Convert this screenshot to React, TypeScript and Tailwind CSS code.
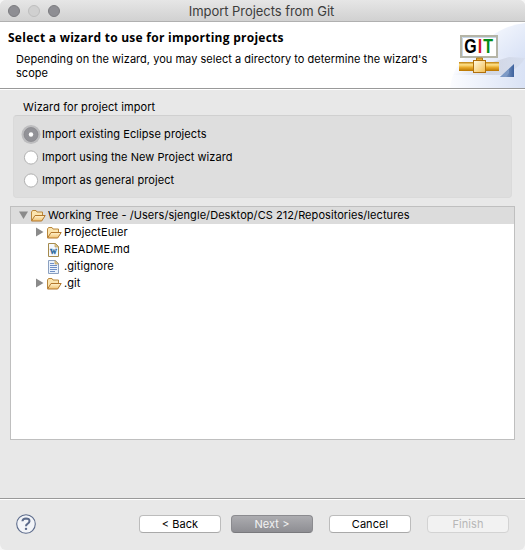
import React from 'react';

function Folder() {
  return (
    <svg width="16" height="16" viewBox="0 0 16 16" className="shrink-0">
      <defs>
        <linearGradient id="folderFront" x1="0" y1="0" x2="0" y2="1">
          <stop offset="0" stopColor="#fff3cf" />
          <stop offset="1" stopColor="#f0c06f" />
        </linearGradient>
      </defs>
      <path d="M1.5 12.5V4L2.5 2.5H6l1 1.5h5.5V7.5" fill="#fbe4ae" stroke="#b8863b" />
      <path d="M1.5 13L5 7.5h10.2l-3.5 5.5z" fill="url(#folderFront)" stroke="#b3772b" strokeLinejoin="round" />
    </svg>
  );
}

function FileIcon({ word = false }: { word?: boolean }) {
  return (
    <svg width="16" height="16" viewBox="0 0 16 16" className="shrink-0">
      <path d="M2.5 1.5h7L12.5 4.5v10h-10z" fill={word ? '#f4f8fd' : '#eaf2fc'} stroke={word ? '#a58a4c' : '#8ba0c0'} />
      <path d="M9 1.5V5h3.5z" fill="#e5cf91" stroke="#b49a5d" strokeWidth=".7" />
      {word ? (
        <text x="7.5" y="11.5" textAnchor="middle" fontFamily="Liberation Serif, serif" fontWeight="bold" fontSize="9.5" fill="#2c689d" stroke="#2c689d" strokeWidth=".3">w</text>
      ) : (
        <path d="M4 4.5h4M4 6.5h7M4 8.5h7M4 10.5h7M4 12.5h5" stroke="#6f8fc5" />
      )}
    </svg>
  );
}

function Row({ label, depth, icon, arrow }: { label: string; depth: number; icon: React.ReactNode; arrow?: 'down' | 'right' }) {
  return (
    <div className={`flex h-[17px] items-center ${depth === 0 ? 'bg-[#dcdcdc] pl-[8px]' : 'pl-[24px]'}`}>
      <svg width="11" height="11" viewBox="0 0 11 11" className="shrink-0">
        {arrow === 'down' && <path d="M0 1.5h9L4.5 9z" fill="#8a8a8a" />}
        {arrow === 'right' && <path d="M1 .5v9L8.5 5z" fill="#8a8a8a" />}
      </svg>
      {icon}
      <span className={`ml-[2px] ${depth === 0 ? 'tracking-[0.065px]' : 'tracking-[0.06px]'}`}>{label}</span>
    </div>
  );
}

function Radio({ label, checked = false, spacing }: { label: string; checked?: boolean; spacing: string }) {
  return (
    <div className="flex h-[23px] items-center">
      <svg width="20" height="20" viewBox="0 0 20 20" className="mr-px shrink-0">
        {checked ? (
          <>
            <circle cx="10" cy="9.5" r="9.5" fill="#bdbdbf" />
            <circle cx="10" cy="9.5" r="7" fill="#929297" stroke="#858589" strokeWidth=".7" />
            <circle cx="10" cy="9.5" r="2.2" fill="#fff" />
          </>
        ) : (
          <circle cx="10" cy="9.5" r="6.6" fill="#fff" stroke="#b1b1b1" />
        )}
      </svg>
      <span className={spacing}>{label}</span>
    </div>
  );
}

function GitBanner() {
  return (
    <svg width="90" height="66" viewBox="0 0 90 66" className="shrink-0">
      <defs>
        <linearGradient id="sky" x1="0" y1="0" x2="1" y2="0">
          <stop offset="0" stopColor="#fbfcff" />
          <stop offset="1" stopColor="#d9e2f5" />
        </linearGradient>
        <linearGradient id="skyTop" x1="0" y1="0" x2="1" y2="1">
          <stop offset="0" stopColor="#fcfdff" />
          <stop offset="1" stopColor="#d6e0f5" />
        </linearGradient>
        <linearGradient id="pipe" x1="0" y1="0" x2="0" y2="1">
          <stop offset="0" stopColor="#bc7e0b" />
          <stop offset=".3" stopColor="#ffe289" />
          <stop offset=".6" stopColor="#e8aa2b" />
          <stop offset="1" stopColor="#b87400" />
        </linearGradient>
        <linearGradient id="joint" x1="0" y1="0" x2="1" y2="1">
          <stop offset="0" stopColor="#fffbe5" />
          <stop offset="1" stopColor="#f2bd50" />
        </linearGradient>
        <linearGradient id="corner" x1="0" y1="0" x2="1" y2="0">
          <stop offset="0" stopColor="#a4b9d8" />
          <stop offset="1" stopColor="#3d629e" />
        </linearGradient>
        <linearGradient id="shade" x1="0" y1="0" x2="1" y2="0">
          <stop offset="0" stopColor="#cdd1dc" stopOpacity="0" />
          <stop offset=".5" stopColor="#b9becd" stopOpacity=".5" />
          <stop offset="1" stopColor="#d2d9e8" stopOpacity=".5" />
        </linearGradient>
      </defs>
      <path d="M41 33Q57 5 90 1V40H41z" fill="url(#skyTop)" />
      <path d="M15 66Q18 42 36 32L90 34V66z" fill="url(#sky)" />
      <path d="M16 53L74 35L90 36Q84 48 66 53z" fill="url(#shade)" />
      <rect x="26" y="14" width="36" height="21" fill="#fff" stroke="#b5b5a7" strokeWidth="2" />
      <path d="M27.5 34V15.5H61" fill="none" stroke="#b7cbe3" strokeWidth=".8" />
      <g transform="scale(.82 1)" fontFamily="Liberation Sans, sans-serif" fontWeight="bold" fontSize="19.5">
        <text x="35.6" y="31.5" fill="#000">G</text>
        <text x="52" y="31.5" fill="#d1121f">I</text>
        <text x="58.9" y="31.5" fill="#008b17">T</text>
      </g>
      <path d="M41.5 36h6v4h-6z" fill="#e4ac38" stroke="#af7917" />
      <rect x="24" y="40" width="40" height="9" fill="url(#pipe)" />
      <rect x="38.5" y="38.5" width="12" height="12" fill="url(#joint)" stroke="#b1700c" />
      <path d="M65 55L79 42v13z" fill="url(#corner)" />
      <path d="M65 55h6l3-4v-4z" fill="#7d9ac6" />
    </svg>
  );
}

function Button({ label, kind = 'normal' }: { label: string; kind?: 'normal' | 'primary' | 'disabled' }) {
  const look = {
    normal: 'border-[#bcbcbc] border-b-[#a9a9a9] bg-white text-black',
    primary: 'border-[#8b8b8f] border-b-[#79797d] bg-gradient-to-b from-[#acacb0] to-[#8e8e93] text-[#f3f3f3]',
    disabled: 'border-[#d3d3d3] bg-[#f2f2f2] text-[#b7b7b7]',
  }[kind];
  return (
    <button className={`flex h-[18px] w-[82px] items-center justify-center rounded-[4px] border tracking-[0.05px] ${look}`}>
      {label}
    </button>
  );
}

export default function App() {
  return (
    <div className="h-[550px] w-[525px] bg-[#f6f6f6]">
      <div className="flex h-[550px] w-[525px] flex-col overflow-hidden rounded-[6px] bg-[#e8e8e8] font-['Inter',sans-serif] text-[11px] leading-[13px] text-black">
        <header className="grid h-[22px] shrink-0 grid-cols-[63px_1fr_65px] items-center border-b border-[#b0b0b0] bg-gradient-to-b from-[#e6e6e6] to-[#d1d1d1]">
          <div className="flex gap-2 pl-2">
            <span className="h-3 w-3 rounded-full border border-[#7b7b7f] bg-[#8e8e93]" />
            <span className="h-3 w-3 rounded-full border border-[#bdbdbd] bg-[#d0d0d0]" />
            <span className="h-3 w-3 rounded-full border border-[#7b7b7f] bg-[#8e8e93]" />
          </div>
          <h1 className="text-center text-[13px] leading-4 tracking-[-0.05px] text-[#3c3c3c]">Import Projects from Git</h1>
        </header>

        <section className="flex h-[67px] shrink-0 justify-between border-b border-[#999] bg-white">
          <div className="whitespace-nowrap pl-2 pt-2">
            <h2 className="font-['Open_Sans',sans-serif] text-[12px] font-bold leading-[15px] tracking-[0.26px]">Select a wizard to use for importing projects</h2>
            <p className="pl-2 pt-[7px] tracking-[0.03px] leading-[14px]">Depending on the wizard, you may select a directory to determine the wizard's<br />scope</p>
          </div>
          <GitBanner />
        </section>

        <main className="flex h-[409px] shrink-0 flex-col border-t border-white px-[10px] pt-[11px]">
          <div className="px-[3px]">
            <div className="h-[13px] pl-[10px] tracking-[0.09px]">Wizard for project import</div>
            <div className="mt-px h-[83px] rounded-[4px] border border-[#dadada] border-t-[#d0d0d0] bg-[#dedede] pl-[7px] pt-[7px]">
              <Radio label="Import existing Eclipse projects" checked spacing="tracking-[0.07px]" />
              <Radio label="Import using the New Project wizard" spacing="tracking-[0.05px]" />
              <Radio label="Import as general project" spacing="tracking-[0.07px]" />
            </div>
          </div>
          <div className="mt-[8px] h-[234px] border border-[#bfbfbf] bg-white">
            <Row label="Working Tree - /Users/sjengle/Desktop/CS 212/Repositories/lectures" depth={0} icon={<Folder />} arrow="down" />
            <Row label="ProjectEuler" depth={1} icon={<Folder />} arrow="right" />
            <Row label="README.md" depth={1} icon={<FileIcon word />} />
            <Row label=".gitignore" depth={1} icon={<FileIcon />} />
            <Row label=".git" depth={1} icon={<Folder />} arrow="right" />
          </div>
        </main>

        <footer className="flex h-[52px] shrink-0 justify-between border-t border-[#999] pl-4 pr-4 shadow-[inset_0_1px_0_#fff]">
          <svg width="20" height="20" viewBox="0 0 20 20" className="mt-[15px]">
            <circle cx="10" cy="10" r="9.3" fill="#f2f4f8" stroke="#5c6b8b" strokeWidth="1.1" />
            <path d="M6.4 7.3Q6.6 4.5 10 4.4Q13.6 4.5 13.5 7.1Q13.4 8.8 11.5 9.8Q10 10.6 10 12.2" fill="none" stroke="#5c6b8b" strokeWidth="2" />
            <rect x="8.8" y="13.7" width="2.4" height="2.4" rx="1" fill="#5c6b8b" />
          </svg>
          <div className="flex pt-4">
            <Button label="< Back" />
            <div className="ml-[10px]"><Button label="Next >" kind="primary" /></div>
            <div className="ml-4"><Button label="Cancel" /></div>
            <div className="ml-4"><Button label="Finish" kind="disabled" /></div>
          </div>
        </footer>
      </div>
    </div>
  );
}
